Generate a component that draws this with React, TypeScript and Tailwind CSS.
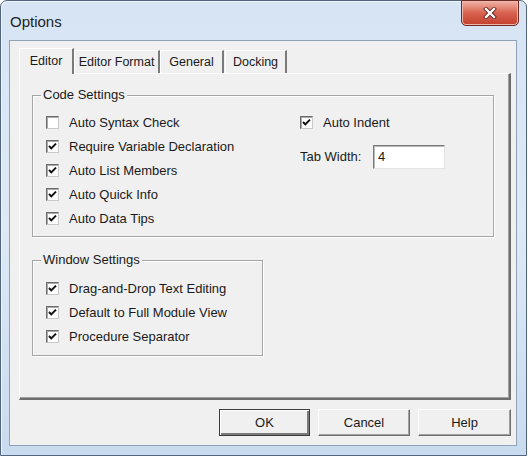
import type { ReactNode } from "react";

const font = { fontFamily: '"Liberation Sans", Arial, sans-serif' };

function CheckBox({ checked }: { checked: boolean }) {
  return (
    <span className="flex h-[13px] w-[13px] shrink-0 items-center justify-center border border-t-[#6d6d6d] border-l-[#6d6d6d] border-r-[#c8c8c8] border-b-[#c8c8c8] bg-white shadow-[inset_1px_1px_0_#a8a8a8]">
      {checked && (
        <svg width="11" height="11" viewBox="0 0 11 11">
          <path d="M2 5 L4.3 7.4 L9 2.6" fill="none" stroke="#111" strokeWidth="2" />
        </svg>
      )}
    </span>
  );
}

function Row({ label, checked }: { label: string; checked: boolean }) {
  return (
    <div className="flex h-[24px] items-center gap-[10px]">
      <CheckBox checked={checked} />
      <span className="text-[13px] leading-none text-[#1a1a1a]">{label}</span>
    </div>
  );
}

function Group({
  title,
  className,
  children,
}: {
  title: string;
  className: string;
  children: ReactNode;
}) {
  return (
    <div
      className={`relative border border-[#a5a5a5] shadow-[inset_1px_1px_0_#ffffff,1px_1px_0_#ffffff] ${className}`}
    >
      <span className="absolute -top-[9px] left-[8px] bg-[#f0f0f0] px-[2px] text-[13px] leading-[16px] text-[#1a1a1a]">
        {title}
      </span>
      {children}
    </div>
  );
}

function Tab({ label, active, width }: { label: string; active?: boolean; width: string }) {
  return (
    <div
      className={`flex items-center justify-center border-l border-t border-l-white border-t-white border-r-2 border-r-[#7a7a7a] text-[12.5px] text-[#1a1a1a] ${width} ${
        active ? "relative z-10 -mb-px h-[26px] bg-[#f0f0f0] pb-[1px]" : "h-[23px] bg-[#f0f0f0]"
      }`}
    >
      {label}
    </div>
  );
}

function Button({ label, isDefault, width }: { label: string; isDefault?: boolean; width: string }) {
  return (
    <button
      className={`flex h-[27px] items-center justify-center bg-[#f0f0f0] text-[13px] text-[#1a1a1a] ${width} ${
        isDefault
          ? "border border-[#3c3c3c] shadow-[inset_1px_1px_0_#ffffff,inset_-2px_-2px_0_#7a7a7a]"
          : "border border-t-white border-l-white border-r-[#6e6e6e] border-b-[#6e6e6e] shadow-[inset_-1px_-1px_0_#a0a0a0]"
      }`}
    >
      {label}
    </button>
  );
}

export default function App() {
  return (
    <div className="h-[460px] w-[532px] bg-white" style={font}>
      <div className="flex h-[456px] w-[527px] flex-col rounded-t-[7px] border border-[#52657e] bg-gradient-to-b from-[#d6e4f4] via-[#dde9f6] to-[#c9dbef] px-[8px] pb-[8px] shadow-[inset_1px_1px_0_#eef4fb]">
        {/* title bar */}
        <div className="relative flex h-[39px] shrink-0 items-center pl-[1px] pt-[4px]">
          <span className="text-[15px] text-[#1e1e1e]">Options</span>
          <div className="absolute -top-px right-[-1px] flex h-[26px] w-[58px] items-center justify-center rounded-b-[5px] border border-[#6d2a22] bg-gradient-to-b from-[#eeb3a6] via-[#d8614f] to-[#c43f2d] shadow-[inset_0_0_0_1px_#f0b8ad]">
            <svg width="14" height="12" viewBox="0 0 14 12">
              <path
                d="M3 2 L11 10 M11 2 L3 10"
                stroke="#5a1d16"
                strokeWidth="4"
                strokeLinecap="square"
              />
              <path
                d="M3 2 L11 10 M11 2 L3 10"
                stroke="#ffffff"
                strokeWidth="2.4"
                strokeLinecap="square"
              />
            </svg>
          </div>
        </div>

        {/* client area */}
        <div className="flex h-[406px] w-[508px] flex-col border border-[#8fa2b8] bg-[#f0f0f0] pl-[9px]">
          {/* tabs */}
          <div className="mt-[7px] flex h-[25px] items-end">
            <Tab label="Editor" active width="w-[55px]" />
            <Tab label="Editor Format" width="w-[86px]" />
            <Tab label="General" width="w-[64px]" />
            <div className="w-px" />
            <Tab label="Docking" width="w-[62px]" />
          </div>

          {/* tab panel */}
          <div className="flex h-[327px] w-[492px] flex-col border-l border-t border-l-white border-t-white border-r-2 border-b-2 border-r-[#6e6e6e] border-b-[#6e6e6e] shadow-[inset_-1px_-1px_0_#a0a0a0] pl-[12px]">
            <Group title="Code Settings" className="mt-[21px] flex h-[142px] w-[462px] pl-[13px] pt-[14px]">
              <div className="flex w-[254px] flex-col">
                <Row label="Auto Syntax Check" checked={false} />
                <Row label="Require Variable Declaration" checked />
                <Row label="Auto List Members" checked />
                <Row label="Auto Quick Info" checked />
                <Row label="Auto Data Tips" checked />
              </div>
              <div className="flex flex-col">
                <Row label="Auto Indent" checked />
                <div className="mt-[11px] flex h-[24px] items-center">
                  <span className="w-[73px] text-[13px] text-[#1a1a1a]">Tab Width:</span>
                  <div className="flex h-[24px] w-[72px] items-center border border-t-[#7a7a7a] border-l-[#7a7a7a] border-r-[#e3e3e3] border-b-[#e3e3e3] bg-white pl-[4px] text-[13px] text-[#1a1a1a] shadow-[inset_1px_1px_0_#b8b8b8]">
                    4
                  </div>
                </div>
              </div>
            </Group>

            <Group title="Window Settings" className="mt-[23px] flex h-[96px] w-[231px] flex-col pl-[13px] pt-[15px]">
              <Row label="Drag-and-Drop Text Editing" checked />
              <Row label="Default to Full Module View" checked />
              <Row label="Procedure Separator" checked />
            </Group>
          </div>

          {/* buttons */}
          <div className="mt-[9px] flex w-[492px] justify-end gap-[8px]">
            <Button label="OK" isDefault width="w-[91px]" />
            <Button label="Cancel" width="w-[92px]" />
            <Button label="Help" width="w-[93px]" />
          </div>
        </div>
      </div>
    </div>
  );
}
